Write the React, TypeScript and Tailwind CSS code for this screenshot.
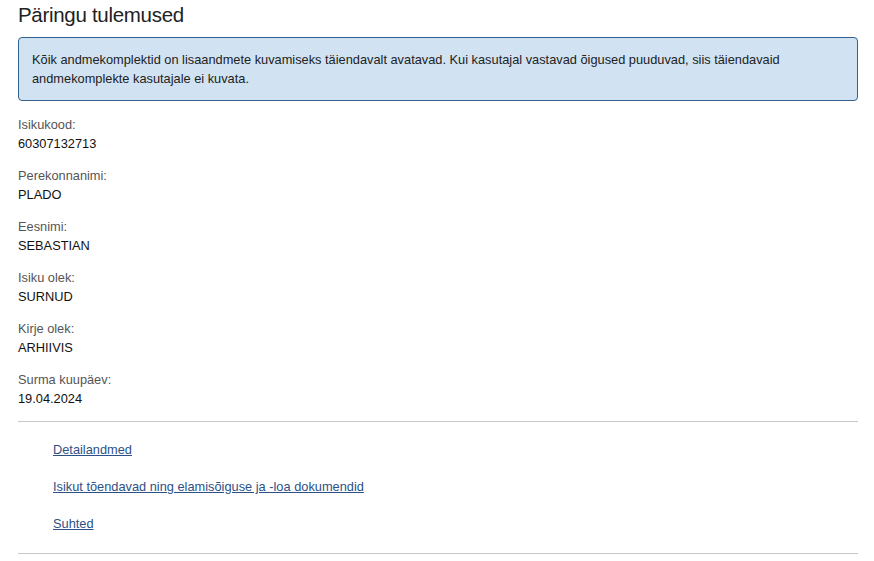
export default function App() {
  const fields = [
    { label: "Isikukood:", value: "60307132713" },
    { label: "Perekonnanimi:", value: "PLADO" },
    { label: "Eesnimi:", value: "SEBASTIAN" },
    { label: "Isiku olek:", value: "SURNUD" },
    { label: "Kirje olek:", value: "ARHIIVIS" },
    { label: "Surma kuupäev:", value: "19.04.2024" },
  ];

  const links = [
    "Detailandmed",
    "Isikut tõendavad ning elamisõiguse ja -loa dokumendid",
    "Suhted",
  ];

  return (
    <div
      className="min-h-screen bg-white pl-[18px] pr-[16px] text-[12.8px] leading-[19px] text-[#222]"
      style={{ fontFamily: '"Liberation Sans", Arial, sans-serif' }}
    >
      <h1 className="pt-[1px] text-[20.5px] leading-[28px] tracking-[-0.3px] text-[#222]">Päringu tulemused</h1>

      <div className="mt-[8px] rounded-[4px] border border-[#34608f] bg-[#d1e2f2] px-[13px] py-[12px] text-[#222]">
        Kõik andmekomplektid on lisaandmete kuvamiseks täiendavalt avatavad. Kui kasutajal vastavad õigused puuduvad, siis täiendavaid andmekomplekte kasutajale ei kuvata.
      </div>

      <div className="mt-[14px] flex flex-col gap-[13px]">
        {fields.map((f, i) => (
          <div key={i}>
            <div className="text-[#555]">{f.label}</div>
            <div className="text-[#111]">{f.value}</div>
          </div>
        ))}
      </div>

      <div className="mt-[13px] border-t border-[#c8c8c8]" />

      <div className="flex flex-col gap-[18px] pl-[35px] pt-[18px] pb-[20px]">
        {links.map((l, i) => (
          <div key={i}>
            <a href="#" className="text-[#2d5187] underline">
              {l}
            </a>
          </div>
        ))}
      </div>

      <div className="border-t border-[#c8c8c8]" />
    </div>
  );
}
